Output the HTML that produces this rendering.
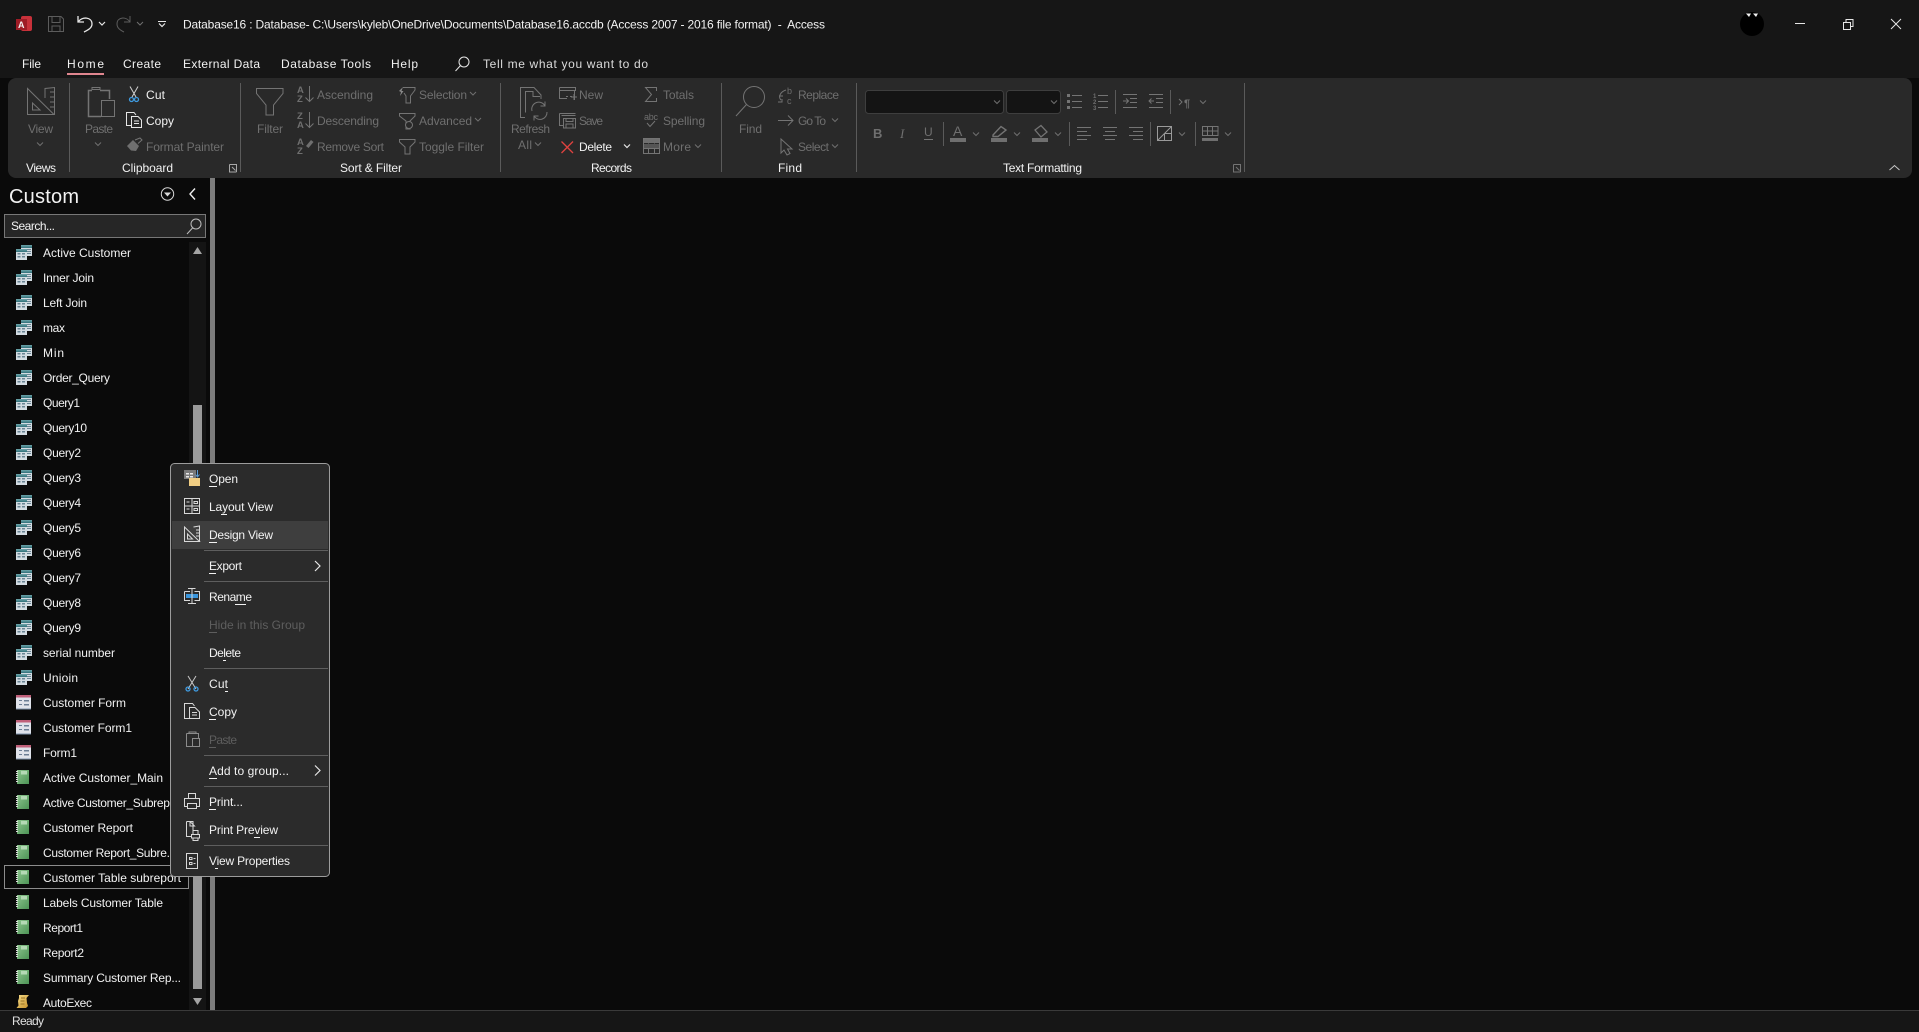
<!DOCTYPE html>
<html><head><meta charset="utf-8"><title>Access</title>
<style>
html,body{margin:0;padding:0;background:#0a0a0a;width:1919px;height:1032px;overflow:hidden}
svg{display:block;position:absolute;left:0;top:0}
text{font-family:"Liberation Sans",sans-serif;font-size:12px;fill:#f2f2f2}
.d text,text.d{fill:#6f6f6f}
.s{fill:none;stroke:#747474;stroke-width:1}
.w{fill:none;stroke:#e6e6e6;stroke-width:1}
.m{fill:none;stroke:#d8d8d8;stroke-width:1}
</style></head><body>
<svg width="1919" height="1032" viewBox="0 0 1919 1032" xmlns="http://www.w3.org/2000/svg">
<defs>
<linearGradient id="gr" x1="0" y1="0" x2="1" y2="1"><stop offset="0" stop-color="#8fc690"/><stop offset="1" stop-color="#4c9455"/></linearGradient>
<linearGradient id="gy" x1="0" y1="0" x2="1" y2="1"><stop offset="0" stop-color="#f5dc8a"/><stop offset="1" stop-color="#c8922a"/></linearGradient>
<linearGradient id="gt" x1="0" y1="0" x2="0" y2="1"><stop offset="0" stop-color="#6fa6ac"/><stop offset="1" stop-color="#2f6f78"/></linearGradient>
<polyline id="c" points="-3,-1.5 0,1.5 3,-1.5" fill="none" stroke="#6f6f6f" stroke-width="1"/>
<polyline id="cw" points="-3,-1.5 0,1.5 3,-1.5" fill="none" stroke="#e6e6e6" stroke-width="1.2"/>
<g id="q">
 <rect x="5" y="-8" width="11" height="11" fill="#d3dce2"/><rect x="5" y="-8" width="11" height="3" fill="url(#gt)"/>
 <path d="M11 -4h4v1h-4zM11 -2h4v1h-4zM11 0h4v1h-4z" fill="#6a8594"/>
 <rect x="0" y="-4" width="11" height="11" fill="#d3dce2"/><rect x="0" y="-4" width="11" height="3" fill="url(#gt)"/>
 <path d="M1.5 0h3v1.500h-3zM6 0h3v1.500h-3zM1.5 3h3v1.500h-3zM6 3h3v1.500h-3z" fill="#6a8594"/>
</g>
<g id="f">
 <rect x="0" y="-8" width="15" height="14" fill="#dfe2ea"/><rect x="0" y="-8" width="15" height="2.500" fill="#c0607a"/>
 <path d="M3 -3h3v1h-3zM8 -3h5v1.500h-5zM3 1h3v1h-3zM8 1h5v1.500h-5z" fill="#6b7d94"/><path d="M0 5.500h15v1h-15z" fill="#7d92aa"/>
</g>
<g id="r">
 <rect x="1" y="-8" width="12" height="14" fill="url(#gr)"/><rect x="5" y="-7" width="6" height="3.500" fill="#b5d9b5"/>
 <path d="M0 -7h2v1h-2zM0 -5h2v1h-2zM0 -3h2v1h-2zM0 -1h2v1h-2zM0 1h2v1h-2zM0 3h2v1h-2z" fill="#dcdcdc"/>
</g>
</defs>

<!-- backgrounds -->
<rect width="1919" height="1032" fill="#0a0a0a"/>
<rect width="1919" height="78" fill="#161616"/>
<rect x="8" y="78" width="1904" height="100" rx="8" fill="#292929"/>
<rect y="1010" width="1919" height="22" fill="#161616"/>
<rect y="1010" width="1919" height="1" fill="#3a3a3a"/>

<!-- title bar -->
<rect x="21" y="16" width="11" height="15" rx="2" fill="#c8313a"/>
<rect x="16" y="19" width="11" height="11" fill="#9e1c26"/>
<text x="18" y="28" style="font-size:9px;font-weight:bold" fill="#fff">A</text>
<path d="M48.500 16.500H61L63.500 19V31.500H48.500ZM52 16.500V22.500H60V16.500M52 31.500V26H60V31.500" class="s" style="stroke:#5c5c5c"/>
<path d="M78 16v6h6M78 22C82 16 92 17 92 24C92 28 88 30 84 32" class="w" style="stroke-width:1.3"/>
<use href="#cw" x="102" y="23.500"/>
<path d="M130 16v6h-6M130 22C126 16 117 17 117 24C117 28 120 30 124 32" fill="none" stroke="#5c5c5c"/>
<use href="#c" x="140" y="23.500"/>
<path d="M158 21.500h8" stroke="#e6e6e6"/><use href="#cw" x="162" y="25"/>
<text x="183" y="28.500" textLength="642" lengthAdjust="spacing">Database16 : Database- C:\Users\kyleb\OneDrive\Documents\Database16.accdb (Access 2007 - 2016 file format)&#160; -&#160; Access</text>

<circle cx="1752" cy="24" r="12" fill="#000"/>
<path d="M1746 13.500h5l-2 3.500zM1753 13.500h5l-2 3.500z" fill="#f0f0f0"/>
<path d="M1795 23.500h10" class="w"/>
<path d="M1843.500 22.500h7v7h-7zM1846 22V19.500h7v7h-2.500" class="w"/>
<path d="M1891 19l10 10M1901 19l-10 10" class="w"/>

<!-- tabs -->
<text x="22" y="68" textLength="19">File</text>
<text x="67" y="68" textLength="37" style="font-weight:500">Home</text>
<rect x="67" y="73" width="37" height="2" fill="#e0868f"/>
<text x="123" y="68" textLength="38">Create</text>
<text x="183" y="68" textLength="77">External Data</text>
<text x="281" y="68" textLength="90">Database Tools</text>
<text x="391" y="68" textLength="27">Help</text>
<circle cx="464" cy="62" r="5" class="w"/><path d="M460.500 65.500L455.500 71" class="w"/>
<text x="483" y="68" textLength="165" style="fill:#dcdcdc">Tell me what you want to do</text>

<!-- ribbon separators -->
<g fill="#5a5a5a">
<rect x="69" y="83" width="1" height="89"/><rect x="240" y="83" width="1" height="89"/><rect x="500" y="83" width="1" height="89"/><rect x="721" y="83" width="1" height="89"/><rect x="856" y="83" width="1" height="89"/><rect x="1244" y="83" width="1" height="89"/>
<rect x="1115" y="90" width="1" height="24"/><rect x="1170" y="90" width="1" height="24"/>
<rect x="943" y="122" width="1" height="24"/><rect x="1069" y="122" width="1" height="24"/><rect x="1150" y="122" width="1" height="24"/><rect x="1195" y="122" width="1" height="24"/>
</g>

<!-- group labels -->
<text x="26" y="172" textLength="30">Views</text>
<text x="122" y="172" textLength="51">Clipboard</text>
<text x="340" y="172" textLength="62">Sort &amp; Filter</text>
<text x="591" y="172" textLength="41">Records</text>
<text x="778" y="172" textLength="24">Find</text>
<text x="1003" y="172" textLength="79">Text Formatting</text>

<!-- disabled labels -->
<g class="d">
<text x="28" y="133" textLength="25">View</text>
<text x="85" y="133" textLength="28">Paste</text>
<text x="146" y="151" textLength="78">Format Painter</text>
<text x="257" y="133" textLength="26">Filter</text>
<text x="317" y="99" textLength="56">Ascending</text>
<text x="317" y="125" textLength="62">Descending</text>
<text x="317" y="151" textLength="67">Remove Sort</text>
<text x="419" y="99" textLength="48">Selection</text>
<text x="419" y="125" textLength="53">Advanced</text>
<text x="419" y="151" textLength="65">Toggle Filter</text>
<text x="511" y="133" textLength="39">Refresh</text>
<text x="518" y="149" textLength="14">All</text>
<text x="579" y="99" textLength="24">New</text>
<text x="579" y="125" textLength="24">Save</text>
<text x="663" y="99" textLength="31">Totals</text>
<text x="663" y="125" textLength="42">Spelling</text>
<text x="663" y="151" textLength="28">More</text>
<text x="739" y="133" textLength="23">Find</text>
<text x="798" y="99" textLength="41">Replace</text>
<text x="798" y="125" textLength="28">Go To</text>
<text x="798" y="151" textLength="31">Select</text>
</g>
<text x="146" y="99" textLength="19">Cut</text>
<text x="146" y="125" textLength="28">Copy</text>
<text x="579" y="151" textLength="33">Delete</text>

<!-- chevrons -->
<use href="#c" x="40" y="144"/><use href="#c" x="98" y="144"/><use href="#c" x="473" y="93.500"/><use href="#c" x="478" y="119.500"/>
<use href="#c" x="538" y="144"/><use href="#cw" x="627" y="146"/><use href="#c" x="698" y="146"/><use href="#c" x="835" y="120"/><use href="#c" x="835" y="146"/>
<use href="#c" x="976" y="134"/><use href="#c" x="1017" y="134"/><use href="#c" x="1058" y="134"/><use href="#c" x="1182" y="134"/><use href="#c" x="1228" y="134"/>
<use href="#c" x="1203" y="102"/>

<!-- views icon -->
<path d="M27.500 88.500V114.500H54ZM32.500 103V110H40ZM45 98V88.500L54.500 87.500V114.500M50 92h4M50 97h4M50 102h4M50 107h4" class="s"/>
<!-- paste -->
<path d="M100 90.500H109.500V99M92 90.500H88.500V116.500H101" class="s" style="stroke-width:1.5"/><path d="M92 89.500h8v-2h-8z M101.500 100.500H114.500V116.500H101.500Z" class="s"/>
<!-- cut -->
<path d="M130 86.500L136 97M138 86.500L132 97" stroke="#d0d0d0" fill="none"/>
<circle cx="131.500" cy="99.500" r="2" fill="none" stroke="#3f9be0" stroke-width="1.300"/><circle cx="136.500" cy="99.500" r="2" fill="none" stroke="#3f9be0" stroke-width="1.300"/>
<!-- copy -->
<path d="M131 125.500H126.500V112.500H134L136 115M131.500 116.500H138L141.500 120V127.500H131.500ZM134 121h5M134 123.500h5" class="w"/>
<!-- painter -->
<path d="M127 146L133 140L139 146L136 151L131 150.500Z" fill="#6f6f6f"/><path d="M135 140L140 138L142 140L138 143.500" class="s"/>
<!-- launchers -->
<path d="M229.500 164.500H236.500V172M229.500 164.500V172H236.500M232 167L235.500 170.500" stroke="#a8a8a8" fill="none"/>
<path d="M1233.500 164.500H1240.500V172M1233.500 164.500V172H1240.500M1236 167L1239.500 170.500" class="s"/>
<!-- filter -->
<path d="M256.500 88.500H283V93.500L273.500 105V115H266V105L256.500 93.500Z" class="s"/>
<!-- sort -->
<g class="d"><text x="297" y="93" style="font-size:9.5px;font-weight:bold">A</text><text x="297" y="102" style="font-size:9.5px;font-weight:bold">Z</text>
<text x="297" y="119" style="font-size:9.5px;font-weight:bold">Z</text><text x="297" y="128" style="font-size:9.5px;font-weight:bold">A</text>
<text x="297" y="145" style="font-size:9.5px;font-weight:bold">A</text><text x="297" y="154" style="font-size:9.5px;font-weight:bold">Z</text></g>
<path d="M309.500 86V101.500M305.500 97.500L309.500 101.500L313.500 97.500M309.500 112V127.500M305.500 123.500L309.500 127.500L313.500 123.500" class="s"/>
<path d="M306 146L311 140L313.500 142L308.500 148Z" fill="#6f6f6f"/>
<!-- selection / advanced / toggle -->
<path d="M403 87.500H415V90L410.500 96V103H406V96L404 93" class="s"/><path d="M399 91L403 87L401.500 91L403.500 91L400 96L401 92Z" fill="#8a8a8a"/>
<path d="M399.500 113.500H415V116L410 121V129H406V121L399.500 116Z" class="s"/><circle cx="409" cy="125" r="3.500" fill="#292929" stroke="#747474"/>
<path d="M399.500 139.500H415V142L410 147V154H405V147L399.500 142Z" class="s"/>
<!-- refresh -->
<path d="M525 117.500H520.500V87.500H534L541 95V99M525.500 112.500V91.500H533V96.500H540" class="s"/>
<path d="M532 111A7 7 0 0 1 545 106M547 112A7 7 0 0 1 534 116M545 101.500V106H540.500M534 120.500V116H538.500" class="s"/>
<!-- new/save -->
<path d="M559.500 87.500H575.500V91M559.500 87.500V98.500H567M561.500 90.500H574.500V100M559.500 90.500H575.500" class="s"/><path d="M566 96.500h2M570 96.500h2M574 94v6M571 97h6" class="s"/>
<path d="M559.500 113.500H575.500M559.500 113.500V125.500H563M561.500 115.500H575.500M563.500 118.500H575.500V128H563.500ZM566 118.500V121.500H573V118.500M566 128V124H573V128" class="s"/>
<path d="M561.500 141.500L573 153M573 141.500L561.500 153" stroke="#e0423f" stroke-width="1.300" fill="none"/>
<!-- totals etc -->
<path d="M656.500 91V87.500H645.500L651.500 94.500L645.500 101.500H656.500V98" class="s"/>
<text x="644" y="120" class="d" style="font-size:9px" textLength="14">abc</text><path d="M647 123L650 126.500L655 121" class="s"/>
<path d="M643.500 138.500H659.500V153.500H643.500ZM648.500 143.500V148.500M654.500 143.500V148.500M643.500 148.500H659.500M648.500 148.500V153.500M654.500 148.500V153.500" class="s"/><rect x="644" y="139" width="15" height="4" fill="#6f6f6f"/><rect x="644" y="144" width="15" height="4" fill="#555"/>
<!-- find -->
<circle cx="754" cy="97" r="10.500" class="s"/><path d="M746.500 104.500L736 116" class="s"/>
<!-- replace -->
<text x="787" y="94" class="d" style="font-size:9px">b</text><text x="787" y="104" class="d" style="font-size:9px">c</text>
<path d="M786 90C780 92 778 97 781 100M782 99V102H778M779 96L783 96" class="s"/>
<path d="M778 120.500H793M788 115.500L793 120.500L788 125.500" class="s"/>
<path d="M781 139V153L784 150L787 155L790 153.500L787.500 149H792Z" class="s"/>

<!-- font boxes -->
<rect x="865.500" y="90.500" width="138" height="23" rx="3" fill="#141414" stroke="#3e3e3e"/>
<rect x="1006.500" y="90.500" width="54" height="23" rx="3" fill="#141414" stroke="#3e3e3e"/>
<use href="#c" x="997" y="102"/><use href="#c" x="1054" y="102"/>
<!-- lists -->
<path d="M1072 95.500h10M1072 101.500h10M1072 107.500h10" class="s"/><path d="M1067 94h3v3h-3zM1067 100h3v3h-3zM1067 106h3v3h-3z" fill="#747474"/>
<path d="M1098 95.500h10M1098 101.500h10M1098 107.500h10" class="s"/>
<text x="1093" y="98" class="d" style="font-size:6px;font-weight:bold">1</text><text x="1093" y="104" class="d" style="font-size:6px;font-weight:bold">2</text><text x="1093" y="110" class="d" style="font-size:6px;font-weight:bold">3</text>
<path d="M1123 94.500h14M1130 98.500h7M1130 102.500h7M1123 107.500h14M1123 101h5M1126 98.500l2.500 2.500l-2.500 2.500" class="s"/>
<path d="M1149 94.500h14M1156 98.500h7M1156 102.500h7M1149 107.500h14M1149 101h5M1151.500 98.500l-2.500 2.500l2.500 2.500" class="s"/>
<path d="M1179 99l3 3l-3 3" class="s"/><text x="1184" y="107" class="d" style="font-size:11px;font-weight:bold">¶</text>
<!-- B I U -->
<text x="873" y="138" class="d" style="font-size:13px;font-weight:bold">B</text>
<text x="900" y="138" class="d" style="font-size:13px;font-style:italic;font-family:'Liberation Serif',serif">I</text>
<text x="924" y="136" class="d" style="font-size:12px">U</text><path d="M924 139.500h9" class="s"/>
<!-- colour buttons -->
<text x="953" y="136" class="d" style="font-size:14px">A</text><rect x="950" y="138" width="16" height="4" fill="#6f6f6f"/>
<path d="M993 135L1001 126.500L1006 130L998 136.500L993 136.500Z" class="s" style="stroke-width:1.4"/><rect x="991" y="138" width="16" height="4" fill="#6f6f6f"/>
<path d="M1035 130L1041 125.500L1047 132L1041 137Z" class="s" style="stroke-width:1.3"/><rect x="1032" y="138" width="16" height="4" fill="#6f6f6f"/>
<!-- align -->
<path d="M1077 127.500h14M1077 131.500h10M1077 135.500h14M1077 139.500h10" class="s"/>
<path d="M1103 127.500h14M1105 131.500h10M1103 135.500h14M1105 139.500h10" class="s"/>
<path d="M1129 127.500h14M1133 131.500h10M1129 135.500h14M1133 139.500h10" class="s"/>
<path d="M1157.500 126.500H1171.500V140.500H1157.500ZM1157.500 140.500L1171.500 126.500M1164.500 133.500V140.500M1164.500 133.500H1171.500" stroke="#9a9a9a" fill="none"/>
<path d="M1202.500 126.500H1218V135.500H1202.500ZM1207.500 126.500V135.500M1212.500 126.500V135.500M1202.500 131H1218" class="s"/><rect x="1202" y="138" width="16" height="3" fill="#6f6f6f"/>
<!-- collapse -->
<path d="M1889.500 170L1894.500 165.500L1899.500 170" stroke="#c8c8c8" fill="none"/>

<!-- nav pane -->
<text x="9" y="203" style="font-size:20px" textLength="70">Custom</text>
<circle cx="167.500" cy="194" r="6.200" stroke="#d8d8d8" fill="none"/><path d="M164 192.500h7l-3.500 4z" fill="#d8d8d8"/>
<path d="M195 188.500L190 194L195 199.500" stroke="#f0f0f0" fill="none" stroke-width="1.400"/>
<rect x="4.500" y="214.500" width="201" height="23" fill="#262626" stroke="#777"/>
<text x="11" y="230" textLength="44">Search...</text>
<circle cx="196" cy="224" r="5" stroke="#bdbdbd" fill="none"/><path d="M192.500 228L187 234" stroke="#bdbdbd" fill="none"/>

<!-- scrollbar + splitter -->
<rect x="189" y="242" width="17" height="768" fill="#141414"/>
<rect x="210" y="178" width="5" height="832" fill="#7c7c7c"/>
<rect x="193" y="405" width="9" height="584" fill="#9a9a9a"/>
<path d="M193 254L197.500 247L202 254Z" fill="#a4a4a4"/>
<path d="M193 998L197.500 1005L202 998Z" fill="#a4a4a4"/>

<!-- list -->
<use href="#q" x="16" y="253"/><text x="43" y="257" textLength="88">Active Customer</text>
<use href="#q" x="16" y="278"/><text x="43" y="282" textLength="51">Inner Join</text>
<use href="#q" x="16" y="303"/><text x="43" y="307" textLength="44">Left Join</text>
<use href="#q" x="16" y="328"/><text x="43" y="332" textLength="22">max</text>
<use href="#q" x="16" y="353"/><text x="43" y="357" textLength="21">Min</text>
<use href="#q" x="16" y="378"/><text x="43" y="382" textLength="67">Order_Query</text>
<use href="#q" x="16" y="403"/><text x="43" y="407" textLength="37">Query1</text>
<use href="#q" x="16" y="428"/><text x="43" y="432" textLength="44">Query10</text>
<use href="#q" x="16" y="453"/><text x="43" y="457" textLength="38">Query2</text>
<use href="#q" x="16" y="478"/><text x="43" y="482" textLength="38">Query3</text>
<use href="#q" x="16" y="503"/><text x="43" y="507" textLength="38">Query4</text>
<use href="#q" x="16" y="528"/><text x="43" y="532" textLength="38">Query5</text>
<use href="#q" x="16" y="553"/><text x="43" y="557" textLength="38">Query6</text>
<use href="#q" x="16" y="578"/><text x="43" y="582" textLength="38">Query7</text>
<use href="#q" x="16" y="603"/><text x="43" y="607" textLength="38">Query8</text>
<use href="#q" x="16" y="628"/><text x="43" y="632" textLength="38">Query9</text>
<use href="#q" x="16" y="653"/><text x="43" y="657" textLength="72">serial number</text>
<use href="#q" x="16" y="678"/><text x="43" y="682" textLength="35">Unioin</text>
<use href="#f" x="16" y="703"/><text x="43" y="707" textLength="83">Customer Form</text>
<use href="#f" x="16" y="728"/><text x="43" y="732" textLength="89">Customer Form1</text>
<use href="#f" x="16" y="753"/><text x="43" y="757" textLength="34">Form1</text>
<use href="#r" x="16" y="778"/><text x="43" y="782" textLength="120">Active Customer_Main</text>
<use href="#r" x="16" y="803"/><text x="43" y="807" textLength="140">Active Customer_Subreport</text>
<use href="#r" x="16" y="828"/><text x="43" y="832" textLength="90">Customer Report</text>
<use href="#r" x="16" y="853"/><text x="43" y="857" textLength="133">Customer Report_Subre...</text>
<rect x="4.500" y="865.500" width="184" height="23" fill="#0a0a0a" stroke="#8c8c8c"/>
<use href="#r" x="16" y="878"/><text x="43" y="882" textLength="138">Customer Table subreport</text>
<use href="#r" x="16" y="903"/><text x="43" y="907" textLength="120">Labels Customer Table</text>
<use href="#r" x="16" y="928"/><text x="43" y="932" textLength="40">Report1</text>
<use href="#r" x="16" y="953"/><text x="43" y="957" textLength="41">Report2</text>
<use href="#r" x="16" y="978"/><text x="43" y="982" textLength="138">Summary Customer Rep...</text>
<path d="M19 995H29L26.500 998L27 1003L28 1006L26 1008H16.500L18.500 1005.500L18 1001L19 998Z" fill="url(#gy)"/><path d="M21 998h4M20.500 1001h4M20.500 1004h4" stroke="#9a7425"/>
<text x="43" y="1007" textLength="49">AutoExec</text>

<!-- status -->
<text x="12" y="1025" textLength="32" style="fill:#e0e0e0">Ready</text>

<!-- context menu -->
<rect x="170.500" y="463.500" width="159" height="413" rx="4" fill="#2b2b2b" stroke="#9c9c9c"/>
<rect x="172" y="521" width="156" height="28" fill="#3e3e3e"/>
<g fill="#5e5e5e">
<rect x="204" y="550" width="124" height="1"/><rect x="204" y="581" width="124" height="1"/><rect x="204" y="668" width="124" height="1"/><rect x="204" y="755" width="124" height="1"/><rect x="204" y="786" width="124" height="1"/><rect x="204" y="845" width="124" height="1"/>
</g>
<text x="209" y="483" textLength="29">Open</text>
<text x="209" y="511" textLength="64">Layout View</text>
<text x="209" y="539" textLength="64">Design View</text>
<text x="209" y="570" textLength="33">Export</text>
<text x="209" y="601" textLength="43">Rename</text>
<text x="209" y="629" textLength="96" style="fill:#5e5e5e">Hide in this Group</text>
<text x="209" y="657" textLength="32">Delete</text>
<text x="209" y="688" textLength="19">Cut</text>
<text x="209" y="716" textLength="28">Copy</text>
<text x="209" y="744" textLength="28" style="fill:#5e5e5e">Paste</text>
<text x="209" y="775" textLength="80">Add to group...</text>
<text x="209" y="806" textLength="34">Print...</text>
<text x="209" y="834" textLength="69">Print Preview</text>
<text x="209" y="865" textLength="81">View Properties</text>
<g stroke="#f2f2f2" fill="none">
<path d="M209 486.500h8M221 514.500h6M209 542.500h8M209 573.500h7M235 604.500h11M223 660.500h3M225 691.500h3M209 719.500h7M209 778.500h8M209 809.500h7M254 837.500h6M215 868.500h3"/>
</g>
<path d="M209 632.500h8M209 747.500h7" stroke="#5e5e5e"/>
<path d="M315 561L320 566L315 571M315 765.500L320 770.500L315 775.500" stroke="#e6e6e6" fill="none" stroke-width="1.200"/>

<!-- menu icons -->
<rect x="184" y="470" width="12" height="9" fill="#7a7a7a"/><path d="M186 473h3v1.500h-3zM190 473h3v1.500h-3zM186 476h3v1.500h-3zM190 476h3v1.500h-3z" fill="#e8e8e8"/>
<rect x="189" y="478" width="11" height="8" fill="#f0cd83"/><path d="M197.500 470V476M195.500 474.500L197.500 477L199.500 474.500" stroke="#5b9bd5" fill="none"/>
<path d="M184.500 498.500H199.500V513.500H184.500ZM192 498.500V513.500M184.500 506H199.500M186.500 502h3M194 501.500h3.500v2h-3.500zM186.500 509h3M194 508.500h3.500v2h-3.500z" class="m"/>
<path d="M184.500 527L199.500 541.500H184.500ZM187.500 534V539H192.500ZM193.500 527L199.500 526V541.500M196 530h3M196 533h3M196 536h3" class="m"/>
<path d="M184.500 591.500H190M184.500 591.500V600.500H190M194.500 591.500H199.500V600.500H194.500" class="m"/><rect x="186" y="594" width="12" height="4" fill="#3a96dd"/>
<path d="M188 588.500H191.500L195.500 588.500M188 603.500H196M192 589V603" class="m"/>
<path d="M188 676L196 689M196 676L188 689" stroke="#c8c8c8" fill="none"/><circle cx="188" cy="689" r="2" fill="none" stroke="#3f9be0" stroke-width="1.300"/><circle cx="196" cy="689" r="2" fill="none" stroke="#3f9be0" stroke-width="1.300"/>
<path d="M189 718.500H184.500V703.500H192.500L194.500 706M189.500 707.500H195L199.500 712V718.500H189.500ZM192 712.500h5M192 715h5" class="m"/>
<path d="M186.500 733.500V746.500H192M186.500 733.500H189M196 733.500H198.500V738M189 733.500h7v-1.500h-7zM192.500 738.500H199.500V746.500H192.500Z" stroke="#8c8c8c" fill="none" stroke-width="1"/>
<path d="M188.500 798V793.500H195.500V798M187.500 806.500H184.500V798.500H199.500V806.500H196.500M187.500 803.500H196.500V808.500H187.500Z" class="m"/>
<path d="M193 832V821.500H187L186.500 822V836.500H191M190 821.500V826H194.500L190 821.500" class="m"/>
<path d="M193 834.500V830.500H198V834.500M191.500 834.500H199.500V838H191.500ZM193 838V840.500H198V838" class="m"/>
<path d="M186.500 853.500H197.500V868.500H186.500ZM189.500 857.500h2.500v2h-2.500zM189.500 862.500h2.500v2h-2.500zM193.500 858.500h2M193.500 863.500h2" class="m"/>
</svg>
</body></html>
